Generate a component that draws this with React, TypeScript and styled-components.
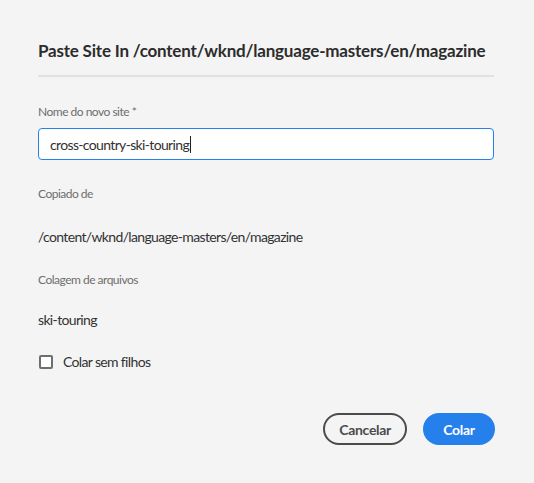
import React from "react";
import styled, { createGlobalStyle } from "styled-components";

const Global = createGlobalStyle`
  html, body { margin: 0; padding: 0; background: #f4f4f4; }
  body { font-family: Lato, "Open Sans", sans-serif; color: #323232; }
  * { box-sizing: border-box; }
`;

const Dialog = styled.div`
  width: 534px;
  height: 483px;
  background: #f4f4f4;
  padding: 40px 40px 0 38px;
  display: flex;
  flex-direction: column;
`;

const Title = styled.h2`
  margin: 0;
  font-size: 17px;
  line-height: 22px;
  font-weight: 700;
  color: #2c2c2c;
  letter-spacing: -0.2px;
  white-space: nowrap;
`;

const Divider = styled.div`
  height: 2px;
  background: #e1e1e1;
  margin-top: 13px;
  width: 456px;
`;

const Label = styled.div<{ $top: number }>`
  margin-top: ${(p) => p.$top}px;
  font-size: 12px;
  line-height: 16px;
  letter-spacing: -0.5px;
  color: #6e6e6e;
`;

const Value = styled.div<{ $top: number }>`
  margin-top: ${(p) => p.$top}px;
  font-size: 14px;
  line-height: 18px;
  letter-spacing: -0.65px;
  color: #323232;
`;

const TextField = styled.div`
  margin-top: 8px;
  width: 456px;
  height: 32px;
  background: #fff;
  border: 1px solid #2680eb;
  border-radius: 4px;
  padding: 0 11px;
  display: flex;
  align-items: center;
  font-size: 14px;
  letter-spacing: -0.65px;
  color: #323232;
`;

const Caret = styled.span`
  display: inline-block;
  width: 1px;
  height: 17px;
  margin-left: 1px;
  background: #222;
`;

const CheckRow = styled.label`
  margin-top: 24px;
  display: flex;
  align-items: center;
  gap: 10px;
  font-size: 14px;
  line-height: 18px;
  letter-spacing: -0.65px;
  color: #323232;
`;

const Box = styled.span`
  width: 14px;
  height: 14px;
  margin-left: 1px;
  border: 2px solid #6e6e6e;
  border-radius: 2px;
  background: #fff;
`;

const Footer = styled.div`
  margin-top: 42px;
  width: 457px;
  display: flex;
  justify-content: flex-end;
  gap: 16px;
`;

const Button = styled.button<{ $primary?: boolean }>`
  height: 32px;
  border-radius: 16px;
  padding: 0 14px;
  font-family: inherit;
  font-size: 14px;
  font-weight: 700;
  letter-spacing: -0.3px;
  border: 2px solid ${(p) => (p.$primary ? "#2680eb" : "#4b4b4b")};
  background: ${(p) => (p.$primary ? "#2680eb" : "transparent")};
  color: ${(p) => (p.$primary ? "#fff" : "#4b4b4b")};
  min-width: 72px;
`;

export default function App() {
  return (
    <>
      <Global />
      <Dialog>
        <Title>Paste Site In /content/wknd/language-masters/en/magazine</Title>
        <Divider />
        <Label $top={27}>Nome do novo site *</Label>
        <TextField>
          cross-country-ski-touring
          <Caret />
        </TextField>
        <Label $top={26}>Copiado de</Label>
        <Value $top={26}>/content/wknd/language-masters/en/magazine</Value>
        <Label $top={26}>Colagem de arquivos</Label>
        <Value $top={23}>ski-touring</Value>
        <CheckRow>
          <Box />
          Colar sem filhos
        </CheckRow>
        <Footer>
          <Button>Cancelar</Button>
          <Button $primary>Colar</Button>
        </Footer>
      </Dialog>
    </>
  );
}
